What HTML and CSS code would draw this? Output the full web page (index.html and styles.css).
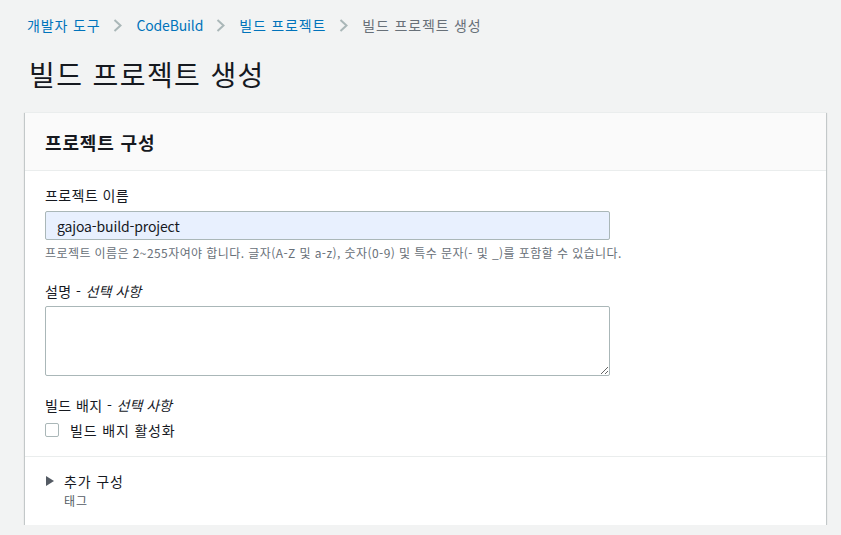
FILE: index.html
```html
<!DOCTYPE html>
<html lang="ko">
<head>
<meta charset="utf-8">
<title>빌드 프로젝트 생성</title>
<link rel="stylesheet" href="styles.css">
</head>
<body>
<div class="page">
  <nav class="breadcrumb">
    <a class="crumb link" href="#">개발자 도구</a>
    <svg class="chev" width="9" height="13" viewBox="0 0 9 13"><path d="M1.5 1 L7.5 6.5 L1.5 12" fill="none" stroke="#aab7b8" stroke-width="2"/></svg>
    <a class="crumb link latin" href="#">CodeBuild</a>
    <svg class="chev" width="9" height="13" viewBox="0 0 9 13"><path d="M1.5 1 L7.5 6.5 L1.5 12" fill="none" stroke="#aab7b8" stroke-width="2"/></svg>
    <a class="crumb link" href="#">빌드 프로젝트</a>
    <svg class="chev" width="9" height="13" viewBox="0 0 9 13"><path d="M1.5 1 L7.5 6.5 L1.5 12" fill="none" stroke="#aab7b8" stroke-width="2"/></svg>
    <span class="crumb current">빌드 프로젝트 생성</span>
  </nav>
  <h1 class="page-title">빌드 프로젝트 생성</h1>
  <section class="card">
    <header class="card-header">
      <h2 class="card-title">프로젝트 구성</h2>
    </header>
    <div class="card-body">
      <div class="field">
        <label class="label">프로젝트 이름</label>
        <input class="input" type="text" value="gajoa-build-project">
        <div class="hint">프로젝트 이름은 2~255자여야 합니다. 글자(A-Z 및 a-z), 숫자(0-9) 및 특수 문자(- 및 _)를 포함할 수 있습니다.</div>
      </div>
      <div class="field">
        <label class="label">설명 - <i class="opt">선택 사항</i></label>
        <textarea class="textarea"></textarea>
      </div>
      <div class="field last">
        <label class="label">빌드 배지 - <i class="opt">선택 사항</i></label>
        <label class="check-row"><span class="checkbox"></span><span>빌드 배지 활성화</span></label>
      </div>
    </div>
    <div class="card-footer">
      <div class="expander">
        <svg class="tri" width="8" height="10" viewBox="0 0 8 10"><path d="M0 0 L8 5 L0 10 Z" fill="#545b64"/></svg>
        <span class="exp-title">추가 구성</span>
      </div>
      <div class="exp-sub">태그</div>
    </div>
  </section>
</div>
</body>
</html>
```
FILE: styles.css
```css
* { box-sizing: border-box; }
html, body { margin: 0; padding: 0; }
body {
  background: #f2f3f3;
  font-family: "Noto Sans CJK KR", "Noto Sans", sans-serif;
  color: #16191f;
  font-size: 14px;
  letter-spacing: 0.06em;
}
.page {
  padding: 14px 15px 0 25px;
}
.breadcrumb {
  display: flex;
  align-items: center;
  height: 22px;
  padding-left: 2px;
  font-size: 14px;
  line-height: 22px;
}
.crumb { text-decoration: none; white-space: nowrap; }
.latin { letter-spacing: -0.01em; }
.link { color: #0073bb; }
.current { color: #687078; }
.chev { margin: 0 14px 0 13px; flex: none; }
.page-title {
  margin: 20px 0 0 4px;
  font-size: 28px;
  line-height: 36px;
  font-weight: 400;
  color: #16191f;
  letter-spacing: 0.05em;
}
.card {
  margin-top: 20px;
  background: #fff;
  border-top: 1px solid #eaeded;
  box-shadow: 0 1px 1px 0 rgba(0,28,36,.3), 1px 1px 1px 0 rgba(0,28,36,.15), -1px 1px 1px 0 rgba(0,28,36,.15);
}
.card-header {
  background: #fafafa;
  border-bottom: 1px solid #eaeded;
  height: 58px;
  display: flex;
  align-items: center;
  padding: 0 20px;
}
.card-title {
  margin: 0;
  font-size: 18px;
  line-height: 22px;
  font-weight: 700;
}
.card-body {
  padding: 13px 20px 15px;
  border-bottom: 1px solid #eaeded;
}
.field { display: flex; flex-direction: column; align-items: flex-start; }
.field + .field { margin-top: 18px; }
.label {
  font-size: 14px;
  line-height: 22px;
  color: #16191f;
  letter-spacing: 0.03em;
}
.opt { font-style: italic; letter-spacing: 0; }
.input {
  margin-top: 5px;
  width: 565px;
  height: 29px;
  border: 1px solid #aab7b8;
  border-radius: 2px;
  background: #e8f0fe;
  padding: 0 11px;
  font-family: inherit;
  font-size: 14px;
  letter-spacing: -0.01em;
  color: #16191f;
}
.hint {
  margin-top: 4px;
  font-size: 12px;
  line-height: 18px;
  color: #687078;
  white-space: nowrap;
  letter-spacing: 0.035em;
}
.textarea {
  margin-top: 4px;
  width: 565px;
  height: 70px;
  border: 1px solid #aab7b8;
  border-radius: 2px;
  background: #fff;
  resize: both;
  font-family: inherit;
}
.check-row {
  margin-top: 3px;
  display: flex;
  align-items: center;
  gap: 11px;
  height: 22px;
  font-size: 14px;
}
.checkbox {
  width: 14px;
  height: 14px;
  border: 1px solid #aab7b8;
  border-radius: 2px;
  background: #fff;
}
.card-footer {
  padding: 13px 20px 15px;
}
.expander {
  display: flex;
  align-items: center;
  height: 22px;
}
.tri { margin-left: 1px; margin-right: 10px; }
.exp-title { font-size: 14px; color: #16191f; }
.exp-sub {
  padding-left: 19px;
  font-size: 12px;
  line-height: 18px;
  color: #545b64;
}
```
